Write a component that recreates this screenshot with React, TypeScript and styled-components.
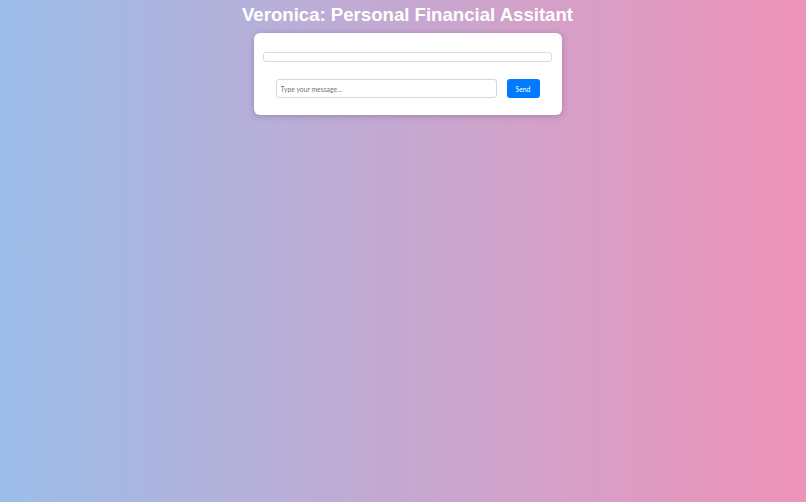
import styled, { createGlobalStyle } from 'styled-components';

const GlobalStyle = createGlobalStyle`
  html, body {
    margin: 0;
    padding: 0;
  }

  body {
    min-height: 100vh;
    background: linear-gradient(to right, #9bbee9, #ef92b8);
    font-family: 'Lato', 'Liberation Sans', sans-serif;
  }
`;

const Page = styled.div`
  display: flex;
  flex-direction: column;
  align-items: center;
  padding: 3px 0 0 9px;
`;

const Title = styled.h1`
  margin: 0;
  color: #ffffff;
  font-family: 'Liberation Sans', Arial, sans-serif;
  font-size: 18.6px;
  font-weight: 700;
  line-height: 23px;
`;

const ChatCard = styled.div`
  box-sizing: border-box;
  width: 308px;
  margin-top: 7px;
  padding: 19px 10px 17px 9px;
  background: #ffffff;
  border-radius: 6px;
  box-shadow: 0 1px 6px rgba(90, 70, 120, 0.35);
`;

const Messages = styled.div`
  box-sizing: border-box;
  height: 10px;
  border: 1px solid #dcdcdc;
  border-radius: 3px;
`;

const InputRow = styled.div`
  display: flex;
  align-items: stretch;
  gap: 10px;
  margin-top: 17px;
  padding: 0 12px 0 13px;
`;

const MessageInput = styled.input`
  box-sizing: border-box;
  flex: 1;
  height: 19px;
  padding: 0 4px;
  border: 1px solid #d6d6d6;
  border-radius: 3px;
  font-family: 'Lato', sans-serif;
  font-size: 6.8px;
  color: #333333;
  outline: none;

  &::placeholder {
    color: #757575;
  }
`;

const SendButton = styled.button`
  box-sizing: border-box;
  width: 33px;
  height: 19px;
  padding: 0;
  border: none;
  border-radius: 3px;
  background: #007bff;
  color: #ffffff;
  font-family: 'Lato', sans-serif;
  font-size: 6.8px;
  cursor: pointer;
`;

export default function App() {
  return (
    <>
      <GlobalStyle />
      <Page>
        <Title>Veronica: Personal Financial Assitant</Title>
        <ChatCard>
          <Messages />
          <InputRow>
            <MessageInput placeholder="Type your message..." />
            <SendButton>Send</SendButton>
          </InputRow>
        </ChatCard>
      </Page>
    </>
  );
}
